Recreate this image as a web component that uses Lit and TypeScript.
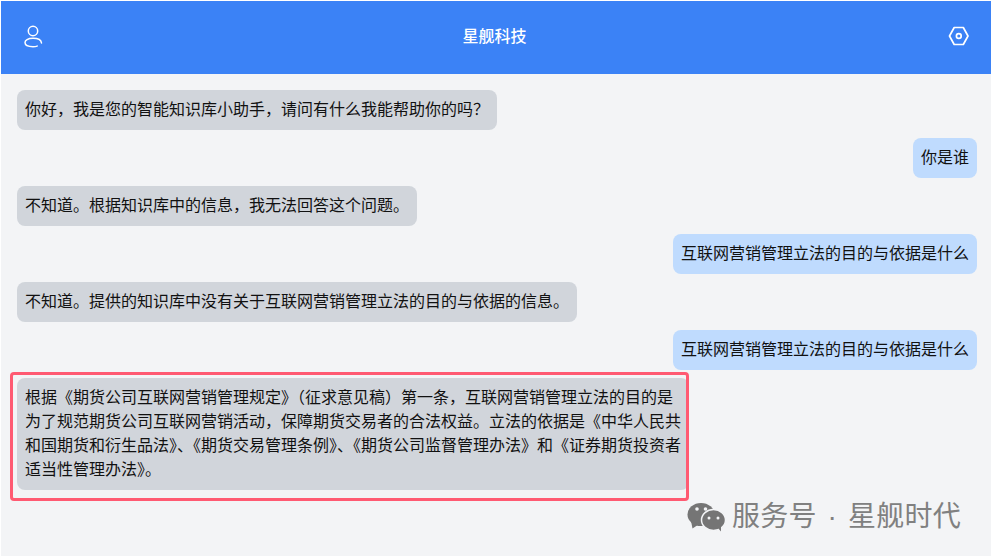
import { LitElement, html, css } from "lit";
import { customElement } from "lit/decorators.js";

const msgs: [string, string][] = [
  ["a", "你好，我是您的智能知识库小助手，请问有什么我能帮助你的吗？"],
  ["u", "你是谁"],
  ["a", "不知道。根据知识库中的信息，我无法回答这个问题。"],
  ["u", "互联网营销管理立法的目的与依据是什么"],
  ["a", "不知道。提供的知识库中没有关于互联网营销管理立法的目的与依据的信息。"],
  ["u", "互联网营销管理立法的目的与依据是什么"],
  ["a", "根据《期货公司互联网营销管理规定》（征求意见稿）第一条，互联网营销管理立法的目的是为了规范期货公司互联网营销活动，保障期货交易者的合法权益。立法的依据是《中华人民共和国期货和衍生品法》、《期货交易管理条例》、《期货公司监督管理办法》和《证券期货投资者适当性管理办法》。"],
];

@customElement("app-root")
export class AppRoot extends LitElement {
  static styles = css`
    :host { display: block; position: relative; width: 991px; height: 556px; overflow: hidden; background: #fff;
      font-family: "Liberation Sans", "Noto Sans CJK SC", sans-serif; }
    .page { display: flex; flex-direction: column; height: 555px; margin: 1px 0 0 1px; background: #f3f4f6; }
    .header { display: flex; align-items: center; justify-content: space-between; height: 73px; padding: 0 21px 3px; box-sizing: border-box; background: #3b82f6; color: #fff; flex: none; }
    .header svg { display: block; }
    .title { font-size: 16px; font-weight: 500; margin: 0 3px 2px 0; }
    .list { display: flex; flex-direction: column; gap: 8px; padding: 16px 14px 0 16px; }
    .b { max-width: 672px; box-sizing: border-box; padding: 8px; border-radius: 8px; font-size: 16px; line-height: 24px; color: #111; }
    .a { align-self: flex-start; background: #d1d5db; }
    .u { align-self: flex-end; background: #bfdbfe; }
    .mark { position: absolute; left: 10px; top: 372px; width: 673px; height: 123px; border: 3px solid #ff5a72; border-radius: 4px; }
    .wm { position: absolute; left: 687px; top: 499px; display: flex; align-items: center; gap: 6px; color: #808080; font-size: 28px; line-height: 36px; letter-spacing: 0.2px; word-spacing: 3px; white-space: nowrap; }
    .wm svg { display: block; }
  `;

  render() {
    return html`
      <div class="page">
        <div class="header">
          <svg width="22" height="24" viewBox="0 0 22 24" fill="none" stroke="#fff" stroke-width="1.5" stroke-linecap="round">
            <circle cx="11" cy="7" r="4.700"></circle>
            <path d="M19.500 19C19.200 16 15.600 14.300 11 14.300 5.800 14.300 3 16.400 3 18.600 3 21 6.300 22.700 11 22.700c1.600 0 3-.2 4.200-.6"></path>
          </svg>
          <div class="title">星舰科技</div>
          <svg width="22" height="22" viewBox="0 0 22 22" fill="none" stroke="#fff" stroke-width="1.7" stroke-linejoin="round">
            <path d="M6.200 2.500h9.100L20 11l-4.700 8.500H6.200L1.500 11z"></path>
            <circle cx="10.800" cy="11" r="2.400"></circle>
          </svg>
        </div>
        <div class="list">
          ${msgs.map(([k, t]) => html`<div class="b ${k}">${t}</div>`)}
        </div>
      </div>
      <div class="mark"></div>
      <div class="wm">
        <svg width="39" height="29" viewBox="0 0 39 29" fill="#757575">
          <ellipse cx="14" cy="11.500" rx="13.500" ry="11.500"></ellipse>
          <path d="M4 18l1.500 7.500 6-4z"></path>
          <ellipse cx="26.500" cy="17" rx="12" ry="10.500" stroke="#f3f4f6" stroke-width="1.500"></ellipse>
          <path d="M31 25l3 3.500v-5.500z"></path>
          <circle cx="10" cy="6" r="1.800" fill="#f3f4f6"></circle>
          <circle cx="18.500" cy="6" r="1.800" fill="#f3f4f6"></circle>
          <circle cx="22" cy="15" r="1.500" fill="#f3f4f6"></circle>
          <circle cx="31" cy="15" r="1.500" fill="#f3f4f6"></circle>
        </svg>
        <span>服务号 · 星舰时代</span>
      </div>
    `;
  }
}
